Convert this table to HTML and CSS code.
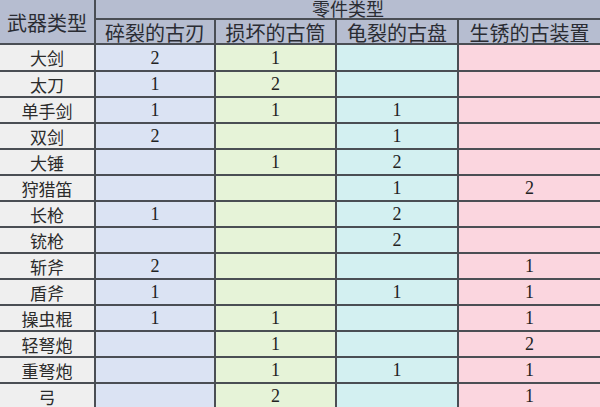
FILE: index.html
```html
<!DOCTYPE html>
<html lang="zh">
<head>
<meta charset="utf-8">
<link rel="stylesheet" href="styles.css">
</head>
<body>
<div class="sheet">
  <div class="cell hd corner">武器类型</div>
  <div class="cell hd group">零件类型</div>
  <div class="cell hd sub">碎裂的古刃</div>
  <div class="cell hd sub">损坏的古筒</div>
  <div class="cell hd sub">龟裂的古盘</div>
  <div class="cell hd sub last">生锈的古装置</div>

  <div class="cell name">大剑</div><div class="cell c1">2</div><div class="cell c2">1</div><div class="cell c3"></div><div class="cell c4"></div>
  <div class="cell name">太刀</div><div class="cell c1">1</div><div class="cell c2">2</div><div class="cell c3"></div><div class="cell c4"></div>
  <div class="cell name">单手剑</div><div class="cell c1">1</div><div class="cell c2">1</div><div class="cell c3">1</div><div class="cell c4"></div>
  <div class="cell name">双剑</div><div class="cell c1">2</div><div class="cell c2"></div><div class="cell c3">1</div><div class="cell c4"></div>
  <div class="cell name">大锤</div><div class="cell c1"></div><div class="cell c2">1</div><div class="cell c3">2</div><div class="cell c4"></div>
  <div class="cell name">狩猎笛</div><div class="cell c1"></div><div class="cell c2"></div><div class="cell c3">1</div><div class="cell c4">2</div>
  <div class="cell name">长枪</div><div class="cell c1">1</div><div class="cell c2"></div><div class="cell c3">2</div><div class="cell c4"></div>
  <div class="cell name">铳枪</div><div class="cell c1"></div><div class="cell c2"></div><div class="cell c3">2</div><div class="cell c4"></div>
  <div class="cell name">斩斧</div><div class="cell c1">2</div><div class="cell c2"></div><div class="cell c3"></div><div class="cell c4">1</div>
  <div class="cell name">盾斧</div><div class="cell c1">1</div><div class="cell c2"></div><div class="cell c3">1</div><div class="cell c4">1</div>
  <div class="cell name">操虫棍</div><div class="cell c1">1</div><div class="cell c2">1</div><div class="cell c3"></div><div class="cell c4">1</div>
  <div class="cell name">轻弩炮</div><div class="cell c1"></div><div class="cell c2">1</div><div class="cell c3"></div><div class="cell c4">2</div>
  <div class="cell name">重弩炮</div><div class="cell c1"></div><div class="cell c2">1</div><div class="cell c3">1</div><div class="cell c4">1</div>
  <div class="cell name">弓</div><div class="cell c1"></div><div class="cell c2">2</div><div class="cell c3"></div><div class="cell c4">1</div>
</div>
</body>
</html>
```

FILE: styles.css
```css
html, body {
  margin: 0;
  padding: 0;
  width: 600px;
  height: 407px;
  overflow: hidden;
  background: #ffffff;
}

.sheet {
  display: grid;
  grid-template-columns: 96px 120px 121px 122px 141px;
  grid-template-rows: 20px 25px 27px repeat(13, 26px);
  font-family: "Liberation Serif", "Noto Sans CJK SC", serif;
  color: #222222;
}

.cell {
  box-sizing: border-box;
  display: flex;
  align-items: center;
  justify-content: center;
  border-right: 2px solid #4a4e54;
  border-bottom: 2px solid #4a4e54;
  font-size: 18px;
  line-height: 1;
}

.hd {
  background: #b6bdd0;
  font-family: "Noto Sans CJK SC", sans-serif;
  font-size: 20px;
  color: #2a2c33;
}

.corner {
  grid-row: 1 / span 2;
  padding-top: 2px;
}

.group {
  grid-column: 2 / span 4;
  border-right: none;
  align-items: flex-start;
  padding-top: 1px;
  font-family: "Liberation Serif", "Noto Sans CJK SC", serif;
  font-size: 18px;
}

.sub {
  padding-top: 3px;
}

.last {
  border-right: none;
}

.name {
  background: #efefef;
  font-family: "Noto Sans CJK SC", sans-serif;
  font-size: 17px;
  color: #2b2b2b;
}

.c1 { background: #dbe3f3; }
.c2 { background: #e6f3d8; }
.c3 { background: #d3f0f1; }
.c4 { background: #fbd6df; border-right: none; }
```
